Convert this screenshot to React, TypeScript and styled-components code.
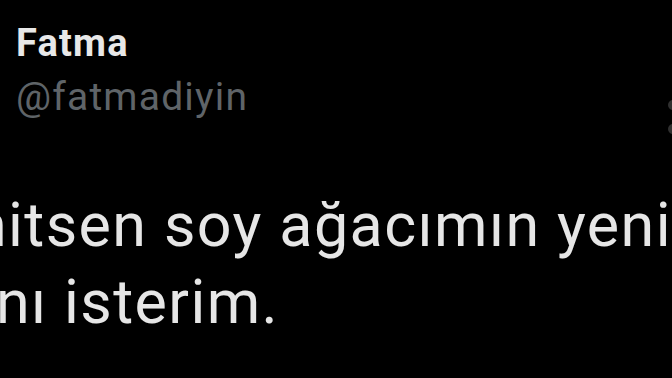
import styled, { createGlobalStyle } from 'styled-components';

const GlobalStyle = createGlobalStyle`
  html, body {
    margin: 0;
    padding: 0;
    background: #000000;
  }
`;

const Screen = styled.div`
  width: 672px;
  height: 378px;
  overflow: hidden;
  background: #000000;
  font-family: Roboto, 'Noto Sans', sans-serif;
`;

const Header = styled.div`
  display: flex;
  justify-content: space-between;
  align-items: flex-start;
  padding: 21px 0 0 16px;
`;

const Names = styled.div`
  display: flex;
  flex-direction: column;
  gap: 10px;
`;

const Name = styled.span`
  font-size: 38px;
  line-height: 44px;
  font-weight: 700;
  letter-spacing: 1.2px;
  color: #e8e8e8;
`;

const Handle = styled.span`
  font-size: 39px;
  line-height: 44px;
  font-weight: 400;
  letter-spacing: 1.2px;
  color: #5f6468;
`;

// the caret menu of the tweet, mostly cut off at the right edge
const More = styled.div`
  display: flex;
  flex-direction: column;
  gap: 14px;
  margin: 79px -6px -40px 0;
`;

const Dot = styled.span`
  width: 10px;
  height: 10px;
  border-radius: 50%;
  background: #303030;
`;

const Body = styled.div`
  margin-top: 68px;
  display: flex;
  flex-direction: column;
`;

const Line = styled.div<{ $shift: number }>`
  margin-left: ${(p) => p.$shift}px;
  white-space: nowrap;
  font-size: 61px;
  line-height: 77px;
  letter-spacing: 1.4px;
  color: #e6e6e6;
`;

export default function App() {
  return (
    <Screen>
      <GlobalStyle />
      <Header>
        <Names>
          <Name>Fatma</Name>
          <Handle>@fatmadiyin</Handle>
        </Names>
        <More>
          <Dot />
          <Dot />
        </More>
      </Header>
      <Body>
        <Line $shift={-27}>nitsen soy ağacımın yeni</Line>
        <Line $shift={-4}>nı isterim.</Line>
      </Body>
    </Screen>
  );
}
